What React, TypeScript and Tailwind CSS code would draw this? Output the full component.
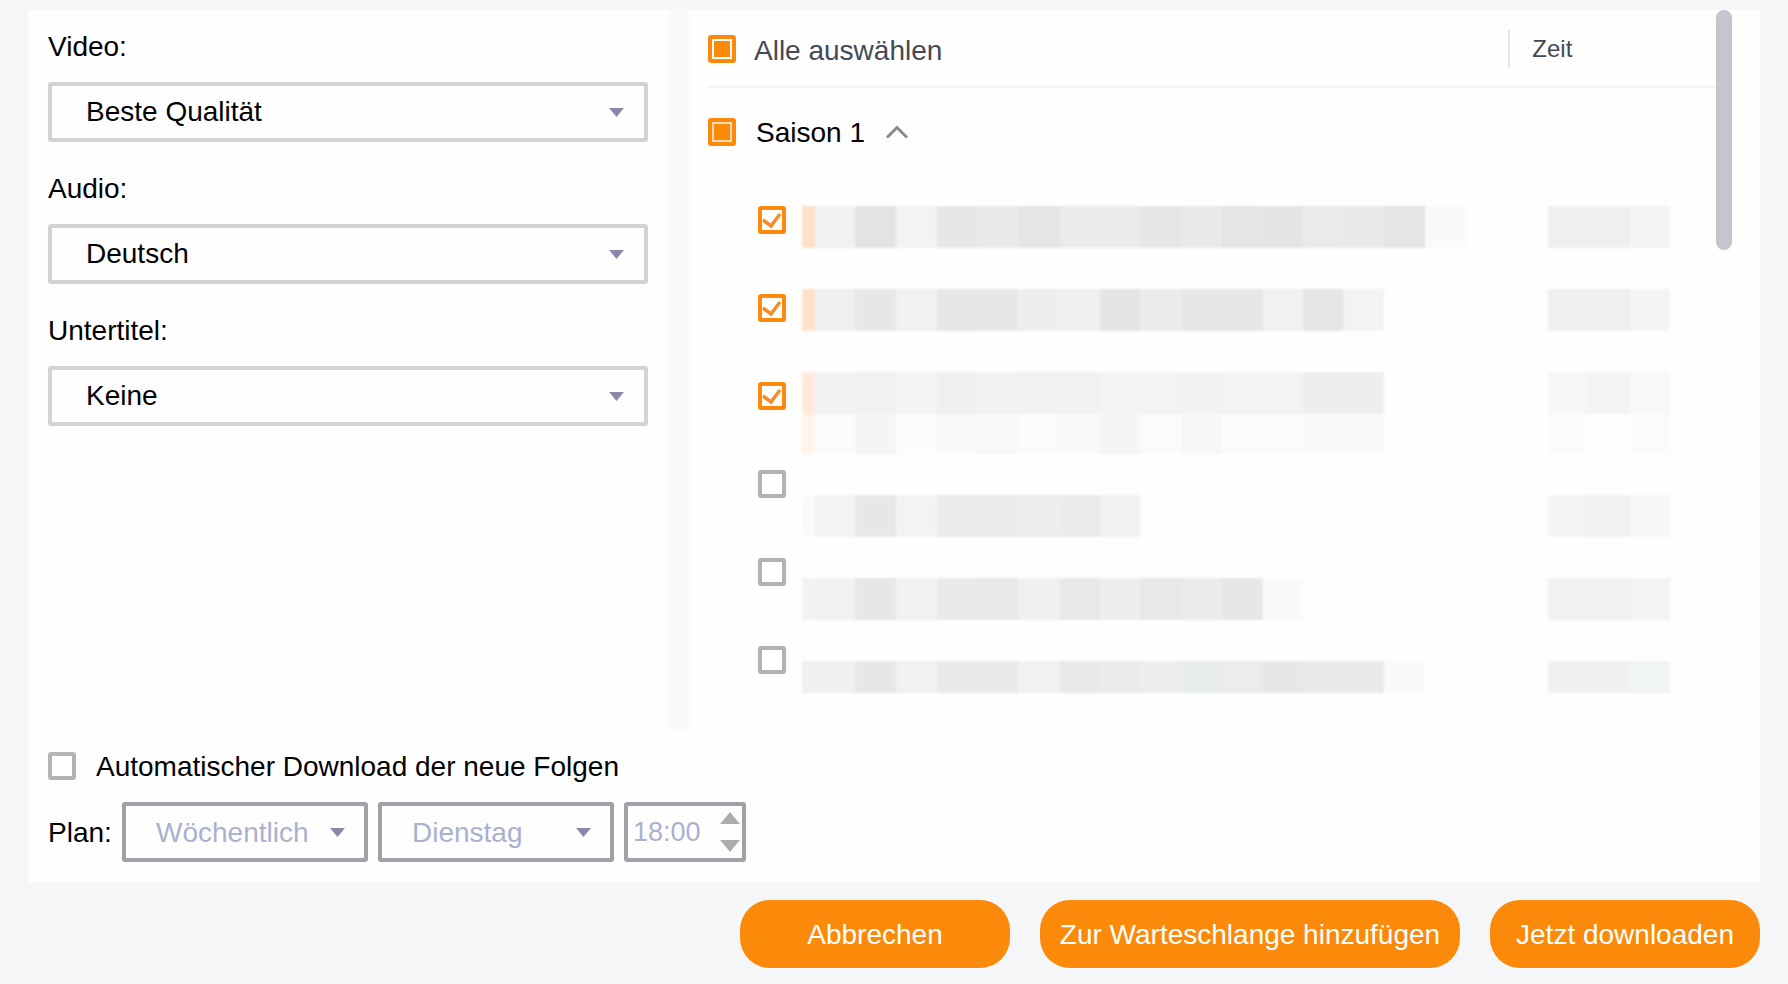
import React from 'react';

const CELLS = [13, 40, 41, 41, 40, 41, 42, 40, 40, 42, 40, 41, 40, 40, 41, 41, 42];
const TIME_CELLS = [37, 45, 40];

// pixelated episode titles, one list of colours per line
const ROWS: { title: string[][]; time: string[][] }[] = [
  {
    title: [['#fde0c8', '#eff1f2', '#e3e3e5', '#f3f3f5', '#e7e7e9', '#e8e9ea', '#e5e5e7', '#ebebed', '#ebebed', '#e5e6e7', '#e9e9eb', '#e4e5e6', '#e2e4e5', '#e9eaeb', '#e9e9ea', '#e5e5e4', '#fafafb']],
    time: [['#efeff1', '#efeff1', '#f3f4f5']],
  },
  {
    title: [['#fde2cb', '#eef0f0', '#e7e7e9', '#f1f1f3', '#e6e6e7', '#e6e7e6', '#eeeef0', '#eff0ee', '#e4e4e6', '#ebebed', '#e6e6e8', '#e6e6e8', '#f1f1ef', '#e5e5e7', '#f1f3f4']],
    time: [['#efeff1', '#efeff1', '#f3f4f5']],
  },
  {
    title: [
      ['#ffe9dc', '#f1f2f2', '#f1f1f3', '#f4f4f6', '#f0f0f2', '#f1f2f2', '#f1f1f3', '#f1f1f3', '#f3f3f5', '#f3f3f5', '#f2f2f4', '#f3f3f5', '#f3f3f5', '#eeeef0', '#eeeef0'],
      ['#fff3ea', '#fbfbfb', '#f5f5f7', '#fcfcfd', '#f9f9fa', '#f8f8f9', '#fbfbfc', '#f9f9fa', '#f5f5f7', '#fbfbfc', '#f7f7f8', '#fbfbfc', '#fbfbfc', '#f9f9fa', '#f9f9fa'],
    ],
    time: [
      ['#f5f8f7', '#f3f3f5', '#f8f8f9'],
      ['#fbfbfc', '#fcfdfd', '#fbfbfc'],
    ],
  },
  {
    title: [['#fafafa', '#f3f3f5', '#e7e7e9', '#f3f3f5', '#ebebed', '#eaebea', '#ecedee', '#ebebed', '#f1f1f3']],
    time: [['#f5f5f6', '#f1f1f3', '#f6f7f8']],
  },
  {
    title: [['#f3f3f5', '#f1f1f3', '#e7e7e9', '#f1f1f3', '#e9e9eb', '#e8e8ea', '#f0f0f2', '#e8e8ea', '#eeeef0', '#e8e8ea', '#ebebed', '#e7e7e9', '#fafafb']],
    time: [['#f1f1f3', '#f1f1f3', '#f3f3f5']],
  },
  {
    title: [['#f0f0f2', '#f0f0f2', '#e7e7e9', '#f1f1f3', '#e9e9eb', '#e8e9e8', '#f1f1f3', '#e8e8ea', '#ebebec', '#ededeb', '#e9ecec', '#ecedea', '#e7e7e9', '#e9e9eb', '#e9e9ea', '#fafafb']],
    time: [['#f0f0f2', '#f0f0f2', '#f1f4f4']],
  },
];

// row heights differ: the last row is cut short, the second line of row 3 is a bit lower
const lineHeight = (row: number, line: number) => {
  if (row === 5) return 'h-[32px]';
  return line === 1 ? 'h-[40px]' : 'h-[42px]';
};

const Caret: React.FC<{ color?: string }> = ({ color = '#8a88a8' }) => (
  <svg width="15" height="9" viewBox="0 0 15 9" className="shrink-0">
    <path d="M0 0H15L7.5 9Z" fill={color} />
  </svg>
);

const PartialBox: React.FC<{ ring: string }> = ({ ring }) => (
  <span className={`w-7 h-7 shrink-0 rounded-[3px] border-4 border-[#fb8a0a] p-[2px] ${ring}`}>
    <span className="block w-full h-full bg-[#fb8a0a]"></span>
  </span>
);

const CheckBox: React.FC<{ checked?: boolean }> = ({ checked }) => (
  <span className={`w-7 h-7 shrink-0 rounded-[3px] border-4 bg-white flex items-center justify-center ${checked ? 'border-[#fb8a0a]' : 'border-[#b4b4b6]'}`}>
    {checked && (
      <svg width="20" height="20" viewBox="0 0 20 20">
        <path d="M1 10L9 16L18 4" fill="none" stroke="#f68b2a" strokeWidth="3.5" />
      </svg>
    )}
  </span>
);

const Field: React.FC<{ label: string; value: string }> = ({ label, value }) => (
  <div>
    <div className="h-10 leading-10 text-black">{label}</div>
    <div className="mt-[15px] h-[60px] rounded-[3px] border-4 border-[#d2d2d6] flex items-center justify-between pl-[34px] pr-[20px] text-black">
      <span>{value}</span>
      <Caret />
    </div>
  </div>
);

const PlanSelect: React.FC<{ value: string; width: string; pad: string }> = ({ value, width, pad }) => (
  <div className={`h-[60px] rounded-[3px] border-4 border-[#a0a0a6] flex items-center justify-between text-[#abb0cf] ${width} ${pad}`}>
    <span className="mt-[2px]">{value}</span>
    <Caret />
  </div>
);

export default function App() {
  return (
    <div className="w-full h-[984px] bg-[#f5f6f8] px-7 pt-[10px] text-[28px] font-['Liberation_Sans',Arial,sans-serif]">
      <div className="h-[872px] bg-[#fefefe] flex flex-col">
        <div className="h-[720px] flex">
          {/* Left: quality selects */}
          <div className="w-[640px] px-5 pt-[17px] flex flex-col gap-[27px]">
            <Field label="Video:" value="Beste Qualität" />
            <Field label="Audio:" value="Deutsch" />
            <Field label="Untertitel:" value="Keine" />
          </div>

          <div className="w-[21px] bg-[#f8f9fb]"></div>

          {/* Right: episode list */}
          <div className="relative flex-1 pl-[19px] pr-[44px] overflow-hidden">
            <div className="h-[78px] pt-[2px] flex items-center border-b-2 border-[#f3f4f6]">
              <PartialBox ring="bg-white" />
              <span className="ml-[18px] mt-[3px] text-[#444a55]">Alle auswählen</span>
              <span className="ml-[566px] w-[2px] h-[38px] bg-[#e3e4e6]"></span>
              <span className="ml-[22px] text-2xl text-[#444a55]">Zeit</span>
            </div>

            <div className="mt-[22px] flex items-center">
              <PartialBox ring="bg-[#fddcb0]" />
              <span className="ml-5 mt-[2px] text-black">Saison 1</span>
              <svg width="24" height="14" viewBox="0 0 24 14" className="ml-5">
                <path d="M2 12.5L12 2.5L22 12.5" fill="none" stroke="#8a8a8a" strokeWidth="3" />
              </svg>
            </div>

            <div className="mt-[52px] pl-[50px] flex gap-4">
              <div className="flex flex-col gap-[60px]">
                {[true, true, true, false, false, false].map((checked, i) => (
                  <CheckBox key={i} checked={checked} />
                ))}
              </div>
              <div className="flex flex-col gap-[41px] blur-[1px]">
                {ROWS.map((row, i) => (
                  <div key={i} className="flex">
                    <div className="w-[746px]">
                      {row.title.map((line, j) => (
                        <div key={j} className={`flex ${lineHeight(i, j)}`}>
                          {line.map((color, k) => (
                            <div key={k} style={{ width: CELLS[k], background: color }}></div>
                          ))}
                        </div>
                      ))}
                    </div>
                    <div>
                      {row.time.map((line, j) => (
                        <div key={j} className={`flex ${lineHeight(i, j)}`}>
                          {line.map((color, k) => (
                            <div key={k} style={{ width: TIME_CELLS[k], background: color }}></div>
                          ))}
                        </div>
                      ))}
                    </div>
                  </div>
                ))}
              </div>
            </div>

            {/* Scrollbar thumb */}
            <div className="absolute top-0 right-7 w-4 h-[240px] rounded-lg bg-[#c5c5cf]"></div>
          </div>
        </div>

        {/* Auto download */}
        <div className="px-5 pt-[22px] pb-5">
          <div className="flex items-center h-7">
            <CheckBox />
            <span className="ml-5 mt-[2px] text-black">Automatischer Download der neue Folgen</span>
          </div>
          <div className="mt-[22px] flex items-center">
            <span className="w-[74px] mt-[2px] text-black">Plan:</span>
            <PlanSelect value="Wöchentlich" width="w-[246px]" pad="pl-[30px] pr-[19px]" />
            <div className="w-[10px]"></div>
            <PlanSelect value="Dienstag" width="w-[236px]" pad="pl-[30px] pr-[19px]" />
            <div className="w-[10px]"></div>
            <div className="w-[122px] h-[60px] rounded-[3px] border-4 border-[#a0a0a6] flex items-center justify-between pl-[5px] pr-[2px] text-[#abb0cf]">
              <span className="text-[27px]">18:00</span>
              <div className="flex flex-col gap-4">
                <svg width="20" height="12" viewBox="0 0 20 12"><path d="M10 0L20 12H0Z" fill="#adadb0" /></svg>
                <svg width="20" height="12" viewBox="0 0 20 12"><path d="M0 0H20L10 12Z" fill="#adadb0" /></svg>
              </div>
            </div>
          </div>
        </div>
      </div>

      <div className="mt-[18px] flex justify-end gap-[30px] text-white">
        <button className="w-[270px] h-[68px] rounded-[30px] bg-[#fb8a0a] pt-[2px]">Abbrechen</button>
        <button className="w-[420px] h-[68px] rounded-[30px] bg-[#fb8a0a] pt-[2px]">Zur Warteschlange hinzufügen</button>
        <button className="w-[270px] h-[68px] rounded-[30px] bg-[#fb8a0a] pt-[2px]">Jetzt downloaden</button>
      </div>
    </div>
  );
}
